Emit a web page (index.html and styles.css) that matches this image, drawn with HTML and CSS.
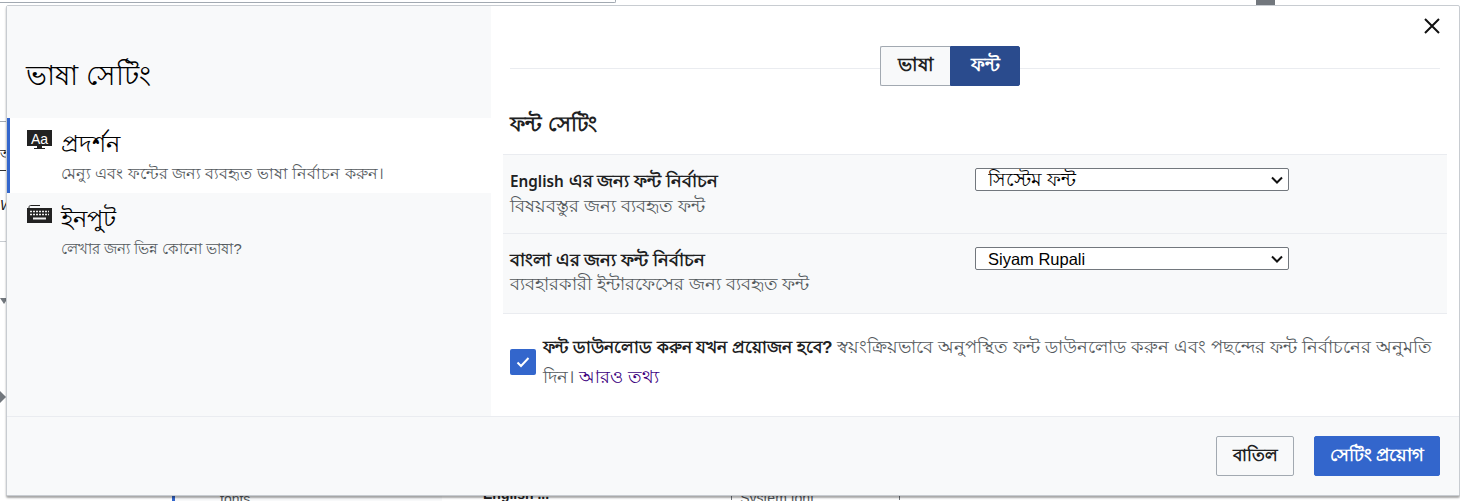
FILE: index.html

```html
<!DOCTYPE html>
<html lang="bn">
<head>
  <meta charset="UTF-8" />
  <meta name="viewport" content="width=device-width, initial-scale=1.0"/>
  <title>ভাষা সেটিং</title>
  <link rel="stylesheet" href="styles.css">
</head>
<body>

<div class="page">
  <!-- Page behind the dialog, only slivers of it show -->
  <div class="strip-top">
    <div class="strip-search"></div>
    <div class="strip-thumb"></div>
  </div>

  <div class="strip-left">
    <div class="sl-row sl-first"></div>
    <div class="sl-row sl-text">অ</div>
    <div class="sl-row sl-second">W</div>
    <div class="sl-arrow sl-arrow-down"></div>
    <div class="sl-arrow sl-arrow-right"></div>
  </div>

  <div class="dialog">
    <div class="dialog-body">
      <div class="sidebar">
        <h1 class="sidebar-title">ভাষা সেটিং</h1>
        <div class="menu-item active">
          <svg class="menu-icon" width="25" height="21" viewBox="0 0 25 21">
            <rect x="0" y="0" width="25" height="16" fill="#222"/>
            <path d="M10 16h5v2h3v1H7v-1h3z" fill="#222"/>
            <text x="12.5" y="13.5" text-anchor="middle" class="icon-text">Aa</text>
          </svg>
          <div>
            <div class="menu-label">প্রদর্শন</div>
            <div class="menu-desc">মেন্যু এবং ফন্টের জন্য ব্যবহৃত ভাষা নির্বাচন করুন।</div>
          </div>
        </div>
        <div class="menu-item">
          <svg class="menu-icon" width="25" height="21" viewBox="0 0 25 21">
            <path d="M2 3V1.8C2 1 3 .5 4 .5h9" stroke="#222" stroke-width="1" fill="none"/>
            <rect x="0" y="3" width="25" height="15" fill="#222"/>
            <path d="M3 6.5h19M3 9.5h19" stroke="#eee" stroke-width="1.6" stroke-dasharray="2 1"/>
            <path d="M6 13.5h13" stroke="#eee" stroke-width="2"/>
          </svg>
          <div>
            <div class="menu-label">ইনপুট</div>
            <div class="menu-desc menu-desc-short">লেখার জন্য ভিন্ন কোনো ভাষা?</div>
          </div>
        </div>
      </div>

      <div class="content">
        <div class="close-row">
          <svg width="16" height="16" viewBox="0 0 16 16">
            <path d="M1 1l14 14M15 1L1 15" stroke="#111" stroke-width="2" fill="none"/>
          </svg>
        </div>

        <div class="tabs">
          <div class="tab">ভাষা</div>
          <div class="tab tab-on">ফন্ট</div>
        </div>

        <h2 class="section-title">ফন্ট সেটিং</h2>

        <div class="font-row">
          <div class="font-info">
            <div class="font-name"><span class="latin">English</span> এর জন্য ফন্ট নির্বাচন</div>
            <div class="font-desc">বিষয়বস্তুর জন্য ব্যবহৃত ফন্ট</div>
          </div>
          <select class="font-select select-bn">
            <option>সিস্টেম ফন্ট</option>
          </select>
        </div>

        <div class="font-row">
          <div class="font-info">
            <div class="font-name">বাংলা এর জন্য ফন্ট নির্বাচন</div>
            <div class="font-desc">ব্যবহারকারী ইন্টারফেসের জন্য ব্যবহৃত ফন্ট</div>
          </div>
          <select class="font-select">
            <option>Siyam Rupali</option>
          </select>
        </div>

        <div class="download">
          <div class="check">
            <svg width="14" height="12" viewBox="0 0 14 12">
              <path d="M1.5 6.5l3.5 3.5 7.5-8" stroke="#fff" stroke-width="2" fill="none"/>
            </svg>
          </div>
          <p class="download-text">
            <strong>ফন্ট ডাউনলোড করুন যখন প্রয়োজন হবে?</strong>
            স্বয়ংক্রিয়ভাবে অনুপস্থিত ফন্ট ডাউনলোড করুন এবং পছন্দের ফন্ট নির্বাচনের অনুমতি<br>
            দিন। <a href="#">আরও তথ্য</a>
          </p>
        </div>
      </div>
    </div>

    <div class="dialog-footer">
      <button class="btn">বাতিল</button>
      <button class="btn btn-primary">সেটিং প্রয়োগ</button>
    </div>
  </div>

  <div class="strip-bottom">
    <div class="sb-panel">fonts.</div>
    <div class="sb-name">English ...</div>
    <div class="sb-select">System font</div>
  </div>
</div>

</body>
</html>
```

FILE: styles.css

```css
html, body {
  margin: 0;
  padding: 0;
  height: 100%;
  overflow: hidden;
  background-color: #fff;
}
body {
  font-family: "Liberation Sans", Arial, sans-serif;
  color: #202122;
}
.page {
  display: grid;
  grid-template-columns: 6px 1454px;
  grid-template-rows: 5px 491px 5px;
  width: 1460px;
  height: 501px;
}

/* behind the dialog */
.strip-top {
  grid-column: 1 / 3;
  display: flex;
  overflow: hidden;
}
.strip-search {
  width: 615px;
  height: 2px;
  border-bottom: 1px solid #a2a9b1;
  border-right: 1px solid #a2a9b1;
  border-bottom-right-radius: 2px;
}
.strip-thumb {
  width: 19px;
  height: 5px;
  margin-left: 640px;
  background-color: #72777d;
}
.strip-left {
  background-color: #fff;
  overflow: hidden;
  font-size: 14px;
  line-height: 16px;
}
.sl-first {
  margin-top: 116px;
  border-bottom: 1px solid #a2a9b1;
}
.sl-text {
  height: 49px;
  box-sizing: border-box;
  padding-top: 24px;
  border-bottom: 1px solid #333;
}
.sl-second {
  height: 71px;
  padding-top: 26px;
  box-sizing: border-box;
  border-bottom: 1px solid #c8ccd1;
  font-style: italic;
}
.sl-arrow {
  width: 0;
  height: 0;
  border-style: solid;
}
.sl-arrow-down {
  margin-top: 56px;
  border-width: 6px 4px 0 4px;
  border-color: #72777d transparent transparent transparent;
}
.sl-arrow-right {
  margin-top: 87px;
  border-width: 6px 0 6px 6px;
  border-color: transparent transparent transparent #72777d;
}
.strip-bottom {
  grid-column: 1 / 3;
  display: flex;
  overflow: hidden;
  font-size: 14px;
  line-height: 6px;
  color: #54595d;
}
.sb-panel {
  width: 270px;
  height: 5px;
  box-sizing: border-box;
  margin-left: 172px;
  padding-left: 45px;
  background-color: #f8f9fa;
  border-left: 3px solid #36c;
}
.sb-name {
  margin-left: 41px;
  margin-top: -5px;
  font-weight: bold;
  color: #202122;
}
.sb-select {
  width: 159px;
  height: 5px;
  margin-left: 182px;
  margin-top: -1px;
  padding-left: 8px;
  border-left: 1px solid #72777d;
  border-right: 1px solid #72777d;
}

/* dialog */
.dialog {
  display: flex;
  flex-direction: column;
  box-sizing: border-box;
  width: 1454px;
  height: 491px;
  background-color: #fff;
  border: 1px solid #c8ccd1;
  border-radius: 2px;
  box-shadow: 0 2px 2px rgba(0, 0, 0, 0.35);
  position: relative;
}
.dialog-body {
  flex: 1;
  display: flex;
  min-height: 0;
}
.sidebar {
  width: 484px;
  background-color: #f8f9fa;
}
.sidebar-title {
  margin: 0;
  height: 112px;
  box-sizing: border-box;
  padding: 50px 0 0 19px;
  font-size: 27.5px;
  line-height: 40px;
  font-weight: normal;
  color: #000;
}
.menu-item {
  display: flex;
  height: 75px;
  box-sizing: border-box;
  padding: 12px 0 0 20px;
  gap: 9px;
}
.menu-item.active {
  background-color: #fff;
  border-left: 3px solid #36c;
  padding-left: 17px;
}
.menu-icon {
  flex-shrink: 0;
}
.icon-text {
  font-size: 14px;
  fill: #fff;
  font-family: "Liberation Sans", Arial, sans-serif;
}
.menu-label {
  font-size: 24px;
  line-height: 28px;
  color: #000;
}
.menu-desc {
  margin-top: 6px;
  font-size: 15.7px;
  line-height: 20px;
  color: #54595d;
}
.menu-desc-short {
  font-size: 14.8px;
}
.content {
  flex: 1;
  padding: 0 12px;
  min-width: 0;
}
.close-row {
  display: flex;
  justify-content: flex-end;
  height: 12px;
  padding: 12px 7px 0 0;
}
.tabs {
  display: flex;
  justify-content: center;
  margin: 16px 7px 0 7px;
  padding-right: 50px;
  background: linear-gradient(#eaecf0, #eaecf0) 0 22px / 100% 1px no-repeat;
}
.tab {
  width: 70px;
  height: 40px;
  box-sizing: border-box;
  border: 1px solid #a2a9b1;
  border-right: 0;
  border-radius: 2px 0 0 2px;
  background-color: #f8f9fa;
  text-align: center;
  font-weight: bold;
  font-size: 18.5px;
  line-height: 36px;
}
.tab-on {
  border: 1px solid #2a4b8d;
  border-radius: 0 2px 2px 0;
  background-color: #2a4b8d;
  color: #fff;
}
.section-title {
  margin: 0;
  padding: 20px 7px 0 7px;
  height: 68px;
  box-sizing: border-box;
  font-size: 21px;
  line-height: 36px;
  font-weight: bold;
}
.font-row {
  display: flex;
  height: 79px;
  box-sizing: border-box;
  padding: 13px 0 0 7px;
  background-color: #f8f9fa;
  border-top: 1px solid #eaecf0;
}
.font-row + .font-row {
  border-bottom: 1px solid #eaecf0;
  height: 81px;
}
.font-info {
  width: 465px;
}
.font-name {
  font-family: "Noto Sans", "Liberation Sans", sans-serif;
  font-size: 18px;
  font-weight: 600;
  line-height: 24px;
}
.latin {
  font-size: 15.3px;
}
.font-desc {
  font-size: 17.5px;
  line-height: 26px;
  color: #54595d;
}
.font-select {
  appearance: none;
  width: 314px;
  height: 23px;
  box-sizing: border-box;
  padding: 0 0 0 12px;
  background: #fff url("data:image/svg+xml,%3Csvg xmlns='http://www.w3.org/2000/svg' width='12' height='8'%3E%3Cpath d='M1 1.5l5 5 5-5' stroke='%23111' stroke-width='2' fill='none'/%3E%3C/svg%3E") no-repeat right 5px center;
  border: 1px solid #72777d;
  border-radius: 2px;
  font-family: "Liberation Sans", Arial, sans-serif;
  font-size: 16.5px;
  color: #000;
}
.select-bn {
  font-size: 18.8px;
}
.download {
  display: flex;
  align-items: center;
  gap: 7px;
  padding: 18px 6px 0 7px;
}
.check {
  display: flex;
  align-items: center;
  justify-content: center;
  flex-shrink: 0;
  width: 26px;
  height: 26px;
  background-color: #36c;
  border-radius: 2px;
}
.download-text {
  margin: 0;
  font-size: 18px;
  line-height: 30px;
  color: #54595d;
}
.download-text strong {
  font-size: 17.2px;
  color: #202122;
}
.download-text a {
  color: #3c0080;
  text-decoration: none;
}
.dialog-footer {
  display: flex;
  justify-content: flex-end;
  gap: 20px;
  height: 79px;
  box-sizing: border-box;
  padding: 19px 19px 0 0;
  background-color: #f8f9fa;
  border-top: 1px solid #eaecf0;
}
.btn {
  height: 40px;
  padding: 0 13px;
  min-width: 78px;
  box-sizing: border-box;
  background-color: #f8f9fa;
  border: 1px solid #a2a9b1;
  border-radius: 2px;
  font-family: inherit;
  font-size: 17px;
  font-weight: bold;
  color: #202122;
}
.btn-primary {
  width: 126px;
  background-color: #36c;
  border-color: #36c;
  font-size: 17.5px;
  color: #fff;
}
```
